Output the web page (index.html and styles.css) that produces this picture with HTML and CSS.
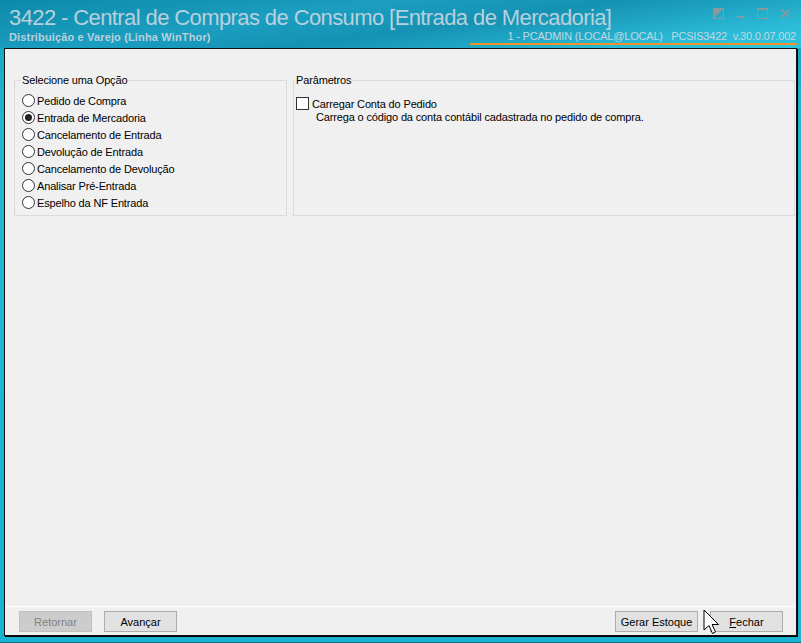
FILE: index.html
```html
<!DOCTYPE html>
<html lang="pt-BR">
<head>
    <meta charset="UTF-8">
    <title>3422 - Central de Compras de Consumo</title>
    <link rel="stylesheet" href="styles.css">
</head>
<body>

<div class="window">
    <div class="titlebar">
        <div class="title-left">
            <div class="title">3422 - Central de Compras de Consumo [Entrada de Mercadoria]</div>
            <div class="subtitle">Distribuição e Varejo (Linha WinThor)</div>
        </div>
        <div class="title-right">
            <div class="controls">
                <svg width="11" height="11" viewBox="0 0 11 11"><rect x="0.5" y="0.5" width="10" height="10" fill="none" stroke="#8c989c"/><polygon points="0,0 11,0 0,11" fill="#8c989c"/></svg>
                <svg width="9" height="11" viewBox="0 0 9 11"><rect x="1" y="8" width="7" height="2" fill="#8c989c"/></svg>
                <svg width="11" height="11" viewBox="0 0 11 11"><rect x="0.5" y="0.5" width="10" height="10" fill="none" stroke="#8c989c"/><rect x="0" y="0" width="11" height="2" fill="#8c989c"/></svg>
                <svg width="11" height="11" viewBox="0 0 11 11"><path d="M1 1 L10 10 M10 1 L1 10" stroke="#8c989c" stroke-width="1.6"/></svg>
            </div>
            <div class="info">1 - PCADMIN (LOCAL@LOCAL)&nbsp;&nbsp;&nbsp;PCSIS3422&nbsp;&nbsp;v.30.0.07.002</div>
        </div>
    </div>

    <div class="panel">
        <div class="content">
            <fieldset class="group group-options">
                <legend>Selecione uma Opção</legend>
                <label class="option"><input type="radio" name="op"> Pedido de Compra</label>
                <label class="option"><input type="radio" name="op" checked> Entrada de Mercadoria</label>
                <label class="option"><input type="radio" name="op"> Cancelamento de Entrada</label>
                <label class="option"><input type="radio" name="op"> Devolução de Entrada</label>
                <label class="option"><input type="radio" name="op"> Cancelamento de Devolução</label>
                <label class="option"><input type="radio" name="op"> Analisar Pré-Entrada</label>
                <label class="option"><input type="radio" name="op"> Espelho da NF Entrada</label>
            </fieldset>
            <fieldset class="group group-params">
                <legend>Parâmetros</legend>
                <label class="check"><input type="checkbox"> Carregar Conta do Pedido</label>
                <div class="hint">Carrega o código da conta contábil cadastrada no pedido de compra.</div>
            </fieldset>
        </div>

        <div class="footer">
            <button class="btn" disabled>Retornar</button>
            <button class="btn">Avançar</button>
            <div class="spacer"></div>
            <button class="btn btn-wide">Gerar Estoque</button>
            <button class="btn"><u>F</u>echar</button>
            <svg class="cursor" width="20" height="28" viewBox="0 0 20 28">
                <path d="M1 1 L1 21 L6 16.5 L9.5 24.5 L12.5 23 L9 15.5 L15.5 15.5 Z" fill="#fff" stroke="#000" stroke-width="1"/>
            </svg>
        </div>
    </div>
</div>

</body>
</html>
```

FILE: styles.css
```css
html, body {
    margin: 0;
    padding: 0;
    width: 100%;
    height: 100%;
    overflow: hidden;
    font-family: "Liberation Sans", Arial, sans-serif;
    font-size: 11px;
    color: #000;
}
.window {
    box-sizing: border-box;
    width: 801px;
    height: 643px;
    display: flex;
    flex-direction: column;
    padding: 0 4px 6px 4px;
    background: linear-gradient(180deg, #0c88a8 0%, #1aa6c4 6%, #22b8d6 20%, #1cb2d2 100%);
    border-bottom: 1px solid #0a6f8a;
}
.titlebar {
    height: 48px;
    display: flex;
    justify-content: space-between;
    background: linear-gradient(172deg, #0d8aa9 0%, #1b9ec0 35%, #1592b3 55%, #2bbcd8 85%, #30c4de 100%);
    margin: 0 -4px;
    padding: 0 4px 0 9px;
}
.title-left {
    flex: 1;
    min-width: 0;
    white-space: nowrap;
}
.title {
    margin-top: 5px;
    font-size: 22px;
    line-height: 25px;
    color: #b8d0dd;
    letter-spacing: -0.6px;
}
.subtitle {
    font-size: 11px;
    font-weight: bold;
    line-height: 14px;
    color: #b8d0dd;
    letter-spacing: 0.15px;
}
.title-right {
    flex: none;
    display: flex;
    flex-direction: column;
    align-items: flex-end;
}
.controls {
    display: flex;
    gap: 12px;
    margin-top: 8px;
    margin-right: 6px;
    height: 11px;
    align-items: flex-start;
}
.info {
    margin-top: 11px;
    padding: 0 1px 0 37px;
    line-height: 13px;
    color: #c2d7e2;
    white-space: nowrap;
    letter-spacing: -0.2px;
    border-bottom: 2px solid #f0922a;
}
.panel {
    flex: 1;
    display: flex;
    flex-direction: column;
    background-color: #f0f0f0;
    border: 1px solid #111;
    box-shadow: 1px 1px 0 #000;
}
.content {
    flex: 1;
    display: flex;
    align-items: flex-start;
    gap: 6px;
    padding: 25px 1px 0 9px;
    letter-spacing: -0.15px;
}
.group {
    margin: 0;
    box-sizing: border-box;
    height: 142px;
    border: 1px solid #dcdcdc;
    padding: 0 0 0 7px;
}
.group legend {
    padding: 0 1px;
    margin-left: -1px;
    line-height: 13px;
}
.group-options {
    width: 273px;
    padding-top: 5px;
}
.group-params {
    flex: 1;
    padding-left: 2px;
    padding-top: 8px;
}
.option, .check {
    display: flex;
    align-items: center;
    height: 17px;
    gap: 2px;
}
.option input {
    appearance: none;
    margin: 0;
    width: 13px;
    height: 13px;
    border: 1px solid #333;
    border-radius: 50%;
    background: #fff;
    display: grid;
    place-items: center;
}
.option input:checked::after {
    content: "";
    width: 7px;
    height: 7px;
    border-radius: 50%;
    background: #222;
}
.check input {
    appearance: none;
    margin: 0 1px 0 0;
    width: 13px;
    height: 13px;
    border: 1px solid #333;
    background: #fff;
}
.hint {
    padding-left: 20px;
    line-height: 10px;
}
.footer {
    position: relative;
    display: flex;
    gap: 12px;
    padding: 4px 13px 3px 14px;
    border-top: 1px solid #fff;
}
.spacer {
    flex: 1;
}
.btn {
    width: 73px;
    height: 21px;
    padding: 0;
    font-family: inherit;
    font-size: 11px;
    color: #000;
    background-color: #e1e1e1;
    border: 1px solid #adadad;
}
.btn-wide {
    width: 83px;
}
.btn:disabled {
    color: #838383;
    background-color: #cccccc;
    border-color: #bfbfbf;
}
.cursor {
    position: absolute;
    left: 698px;
    top: 2px;
}
```
